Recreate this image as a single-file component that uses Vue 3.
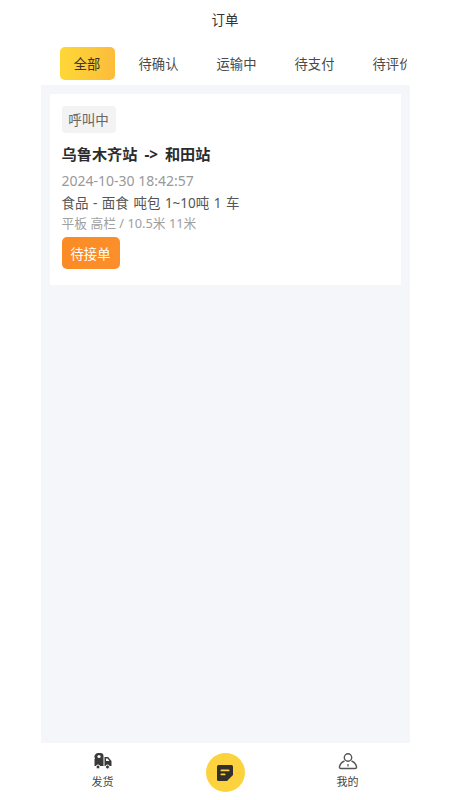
<script setup>
const tabs = ['全部', '待确认', '运输中', '待支付', '待评价']
</script>

<template>
  <div class="phone">
    <header class="title">订单</header>
    <nav class="tabs">
      <span v-for="(t, i) in tabs" :key="t" class="tab" :class="{ active: i === 0 }">{{ t }}</span>
    </nav>
    <main class="list">
      <article class="card">
        <span class="status">呼叫中</span>
        <h2 class="route">乌鲁木齐站 -&gt; 和田站</h2>
        <p class="time">2024-10-30 18:42:57</p>
        <p class="goods">食品 - 面食 吨包 1~10吨 1 车</p>
        <p class="spec">平板 高栏 / 10.5米 11米</p>
        <button class="action">待接单</button>
      </article>
    </main>
    <footer class="bar">
      <div class="item">
        <svg class="icon" viewBox="0 0 20 18" width="20" height="18">
          <path fill="#3a3a3a" d="M2 6.500a3.600 3.600 0 0 1 3-5.500h2.500a3 3 0 0 1 3 3v10H1.500V7z" />
          <circle cx="6" cy="4.500" r="1.600" fill="#fff" />
          <path fill="#3a3a3a" d="M11.500 5h3.600l3.400 4v5h-7z" />
          <path fill="#fff" d="M13 6.500h1.600l1.800 2.400H13z" />
          <circle cx="5" cy="15" r="2" fill="#3a3a3a" stroke="#fff" />
          <circle cx="14.500" cy="15" r="2" fill="#3a3a3a" stroke="#fff" />
        </svg>
        <span>发货</span>
      </div>
      <div class="center">
        <svg viewBox="0 0 20 20" width="20" height="20">
          <path fill="#33302a" d="M3.500 2h13A1.500 1.500 0 0 1 18 3.500V12l-6 6H3.500A1.500 1.500 0 0 1 2 16.500v-13A1.500 1.500 0 0 1 3.500 2z" />
          <rect x="5.500" y="6.500" width="9" height="1.800" rx=".9" fill="#ffd23f" />
          <rect x="5.500" y="10.500" width="5" height="1.800" rx=".9" fill="#ffd23f" />
        </svg>
      </div>
      <div class="item">
        <svg class="icon" viewBox="0 0 20 18" width="20" height="18">
          <circle cx="10" cy="5.500" r="3.700" fill="none" stroke="#555" stroke-width="1.400" />
          <path fill="none" stroke="#555" stroke-width="1.400" stroke-linejoin="round" d="M6.500 9C4 10 2 12 1.500 14.500q-.3 2 1.500 2h14q1.800 0 1.500-2C18 12 16 10 13.500 9" />
          <path stroke="#555" stroke-width="1.200" d="M10 12v2.500" />
        </svg>
        <span>我的</span>
      </div>
    </footer>
  </div>
</template>

<style scoped>
.phone {
  width: 369px;
  height: 800px;
  margin: 0 auto;
  display: flex;
  flex-direction: column;
  background: #fff;
  font-family: "Noto Sans", "Noto Sans CJK SC", sans-serif;
  color: #333;
}
.title {
  height: 40px;
  padding-bottom: 2px;
  box-sizing: border-box;
  display: flex;
  align-items: center;
  justify-content: center;
  font-size: 13.500px;
  flex-shrink: 0;
}
.tabs {
  height: 45px;
  width: 366px;
  padding: 7px 0 0 19px;
  box-sizing: border-box;
  display: flex;
  gap: 38px;
  overflow: hidden;
  flex-shrink: 0;
}
.tab {
  width: 40px;
  height: 33px;
  padding-bottom: 1px;
  box-sizing: border-box;
  flex-shrink: 0;
  display: flex;
  align-items: center;
  justify-content: center;
  font-size: 13.300px;
  color: #4a4a4a;
  white-space: nowrap;
}
.tab.active {
  width: 55px;
  margin-right: -14px;
  border-radius: 5px;
  background: linear-gradient(90deg, #fdd835, #fcbc3c);
  color: #3a3320;
}
.list {
  flex: 1;
  background: #f5f6fa;
  padding: 9px;
}
.card {
  height: 191px;
  box-sizing: border-box;
  background: #fff;
  padding: 12px 12px 0;
  display: flex;
  flex-direction: column;
  align-items: flex-start;
}
.status {
  width: 54px;
  height: 27px;
  padding-bottom: 1px;
  box-sizing: border-box;
  display: flex;
  align-items: center;
  justify-content: center;
  border-radius: 4px;
  background: #f3f3f3;
  color: #666;
  font-size: 13.500px;
}
.route {
  margin: 9px 0 0;
  font-size: 15.200px;
  line-height: 24px;
  font-weight: 700;
  word-spacing: 3px;
  color: #2b2b2b;
}
.time {
  margin: 5px 0 0;
  font-size: 14px;
  line-height: 20px;
  color: #999;
}
.goods {
  margin: 2px 0 0;
  font-size: 13.500px;
  line-height: 20px;
  word-spacing: 1px;
  color: #555;
}
.spec {
  margin: 1px 0 0;
  font-size: 12.800px;
  line-height: 18px;
  color: #a0a0a0;
}
.action {
  margin-top: 5px;
  width: 58px;
  height: 32px;
  border: 0;
  padding: 0;
  border-radius: 5px;
  background: linear-gradient(90deg, #fb8b24, #fc8f2b);
  color: #fff;
  font: 13.300px "Noto Sans CJK SC", sans-serif;
}
.bar {
  height: 57px;
  flex-shrink: 0;
  display: flex;
  justify-content: space-between;
  padding: 0 50px;
  box-sizing: border-box;
}
.item {
  width: 24px;
  display: flex;
  flex-direction: column;
  align-items: center;
  padding-top: 9px;
  font-size: 11px;
  line-height: 14px;
  color: #444;
  white-space: nowrap;
}
.icon {
  margin-bottom: 5px;
}
.center {
  width: 39px;
  height: 39px;
  margin-top: 10px;
  border-radius: 50%;
  background: #fdd23f;
  display: flex;
  align-items: center;
  justify-content: center;
}
</style>
